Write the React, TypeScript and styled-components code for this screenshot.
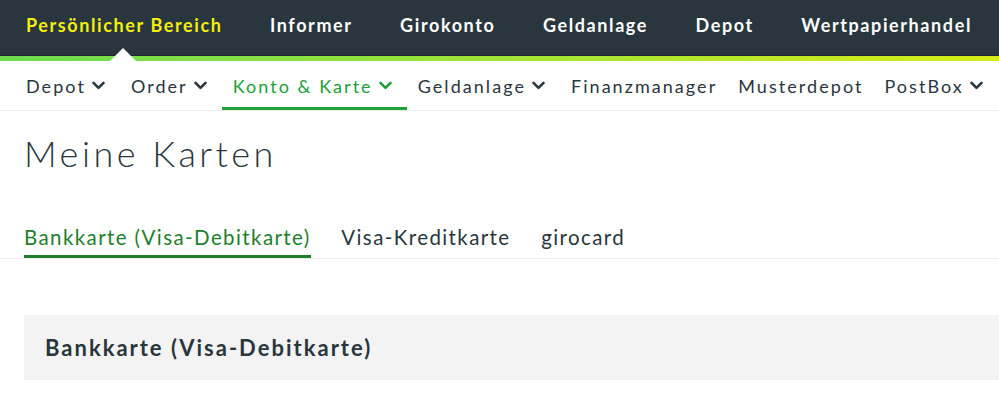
import React from "react";
import styled, { createGlobalStyle } from "styled-components";

const Global = createGlobalStyle`
  html, body { margin: 0; padding: 0; background: #ffffff; }
  body { font-family: Lato, "Open Sans", "Liberation Sans", sans-serif; color: #29363d; }
  * { box-sizing: border-box; }
`;

const Page = styled.div`
  width: 999px;
  overflow: hidden;
`;

const TopBar = styled.nav`
  height: 55px;
  background: #29363d;
  display: flex;
  align-items: stretch;
  gap: 47.5px;
  padding-left: 26px;
`;

const TopItem = styled.a<{ $active?: boolean }>`
  position: relative;
  display: flex;
  align-items: center;
  padding-bottom: 5px;
  font-size: 18px;
  font-weight: 700;
  letter-spacing: 1.6px;
  line-height: 22px;
  color: ${(p) => (p.$active ? "#f4ef0d" : "#ffffff")};
  white-space: nowrap;
  text-decoration: none;
`;

const Notch = styled.span`
  position: absolute;
  left: calc(50% - 0.75px);
  bottom: -6px;
  transform: translateX(-50%);
  width: 0;
  height: 0;
  border-left: 13.5px solid transparent;
  border-right: 13.5px solid transparent;
  border-bottom: 13px solid #ffffff;
  z-index: 2;
`;

const Accent = styled.div`
  height: 6px;
  border-top: 1px solid #1d282d;
  background: linear-gradient(90deg, #6ddb4f 0%, #9be33a 45%, #d6ec18 100%);
`;

const SubNav = styled.nav`
  height: 50px;
  display: flex;
  align-items: stretch;
  padding-left: 15px;
  border-bottom: 1px solid #ececec;
`;

const SubItem = styled.a<{ $active?: boolean; $menu?: boolean }>`
  display: flex;
  align-items: center;
  gap: 6px;
  padding: 3px ${(p) => (p.$menu ? 15 : 10)}px 0 11px;
  font-size: 18px;
  font-weight: 400;
  letter-spacing: 2.05px;
  line-height: 22px;
  color: ${(p) => (p.$active ? "#21a038" : "#29363d")};
  border-bottom: 3px solid ${(p) => (p.$active ? "#21a038" : "transparent")};
  white-space: nowrap;
  text-decoration: none;
`;

const Chevron = ({ color }: { color: string }) => (
  <svg width="13" height="9" viewBox="0 0 13 9" aria-hidden="true">
    <polyline
      points="1.5,1.8 6.5,6.8 11.5,1.8"
      fill="none"
      stroke={color}
      strokeWidth="2.6"
      strokeLinecap="round"
      strokeLinejoin="round"
    />
  </svg>
);

const Title = styled.h1`
  margin: 0;
  padding: 21px 0 0 24px;
  font-size: 36px;
  font-weight: 300;
  letter-spacing: 3.5px;
  line-height: 43px;
  color: #29363d;
`;

const Tabs = styled.div`
  margin-top: 50px;
  display: flex;
  gap: 30.6px;
  padding-left: 24px;
  border-bottom: 1px solid #ececec;
`;

const Tab = styled.a<{ $active?: boolean }>`
  display: flex;
  align-items: center;
  padding-bottom: 5px;
  font-size: 20.5px;
  font-weight: 400;
  letter-spacing: 1.4px;
  line-height: 24.6px;
  color: ${(p) => (p.$active ? "#1e7e2c" : "#29363d")};
  border-bottom: 3px solid ${(p) => (p.$active ? "#1e7e2c" : "transparent")};
  white-space: nowrap;
  text-decoration: none;
`;

const Panel = styled.section`
  margin: 56px 0 0 24px;
  height: 65px;
  background: #f3f3f4;
  display: flex;
  align-items: center;
  padding: 1px 0 0 21px;
`;

const PanelTitle = styled.h2`
  margin: 0;
  font-size: 22px;
  font-weight: 700;
  letter-spacing: 2px;
  line-height: 26px;
  color: #29363d;
`;

const topItems = [
  "Persönlicher Bereich",
  "Informer",
  "Girokonto",
  "Geldanlage",
  "Depot",
  "Wertpapierhandel",
];

const subItems: { label: string; menu: boolean; active?: boolean }[] = [
  { label: "Depot", menu: true },
  { label: "Order", menu: true },
  { label: "Konto & Karte", menu: true, active: true },
  { label: "Geldanlage", menu: true },
  { label: "Finanzmanager", menu: false },
  { label: "Musterdepot", menu: false },
  { label: "PostBox", menu: true },
];

export default function App() {
  return (
    <Page>
      <Global />
      <TopBar>
        {topItems.map((t, i) => (
          <TopItem key={t} $active={i === 0}>
            {t}
            {i === 0 && <Notch />}
          </TopItem>
        ))}
      </TopBar>
      <Accent />
      <SubNav>
        {subItems.map((s) => (
          <SubItem key={s.label} $active={s.active} $menu={s.menu}>
            {s.label}
            {s.menu && <Chevron color={s.active ? "#21a038" : "#29363d"} />}
          </SubItem>
        ))}
      </SubNav>
      <Title>Meine Karten</Title>
      <Tabs>
        <Tab $active>Bankkarte (Visa-Debitkarte)</Tab>
        <Tab>Visa-Kreditkarte</Tab>
        <Tab>girocard</Tab>
      </Tabs>
      <Panel>
        <PanelTitle>Bankkarte (Visa-Debitkarte)</PanelTitle>
      </Panel>
    </Page>
  );
}
